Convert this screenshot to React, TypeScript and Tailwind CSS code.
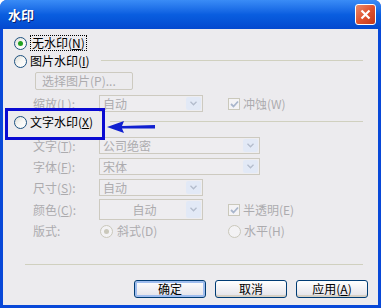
import type { ReactNode } from 'react'

const font = { fontFamily: '"Noto Sans CJK SC", "Noto Sans", sans-serif' }

function Key({ k }: { k: string }) {
  return (
    <span>
      (<span className="underline underline-offset-1">{k}</span>)
    </span>
  )
}

function Radio({ checked, disabled }: { checked?: boolean; disabled?: boolean }) {
  return (
    <span
      className={`flex h-[13px] w-[13px] shrink-0 items-center justify-center rounded-full border ${
        disabled
          ? 'border-[#cac8bb] bg-[#f3f2f4]'
          : 'border-[#1c5180] bg-gradient-to-br from-[#dcdcd6] via-[#f7f7f5] to-white'
      }`}
    >
      {checked && (
        <span
          className={`h-[5px] w-[5px] rounded-full ${disabled ? 'bg-[#cac8bb]' : 'bg-[#21a121]'}`}
        />
      )}
    </span>
  )
}

function Checkbox() {
  return (
    <span className="flex h-[12px] w-[12px] shrink-0 items-center justify-center border border-[#cac8bb] bg-[#f4f3f5]">
      <svg width="9" height="8" viewBox="0 0 9 8">
        <path d="M1 4 L3.5 6.5 L8 1.5" fill="none" stroke="#a9b6cc" strokeWidth="1.8" />
      </svg>
    </span>
  )
}

function Select({ text, w, h = 17, center }: { text: string; w: number; h?: number; center?: boolean }) {
  return (
    <div
      className="flex items-stretch border border-[#cdcac0] bg-[#eeedf0] p-px"
      style={{ width: w, height: h }}
    >
      <span className={`flex flex-1 items-center pl-[2px] text-[#acabae] ${center ? 'justify-center' : ''}`}>
        {text}
      </span>
      <span className="flex w-[15px] items-center justify-center rounded-[2px] bg-[#e2e9f6]">
        <svg width="7" height="5" viewBox="0 0 7 5">
          <path d="M0.5 0.8 L3.5 3.8 L6.5 0.8" fill="none" stroke="#b3bccc" strokeWidth="1.3" />
        </svg>
      </span>
    </div>
  )
}

function Label({ children }: { children: ReactNode }) {
  return <span className="w-[66px] shrink-0 text-[#acabae]">{children}</span>
}

function XpButton({ children, isDefault }: { children: ReactNode; isDefault?: boolean }) {
  return (
    <button
      className={`flex h-[18px] w-[72px] items-center justify-center rounded-[3px] border border-[#003c74] bg-gradient-to-b from-white to-[#e3e2e8] text-black ${
        isDefault ? 'shadow-[inset_0_0_0_2px_#9fbdee]' : 'shadow-[inset_0_-2px_0_#d6d0c5]'
      }`}
    >
      {children}
    </button>
  )
}

export default function App() {
  return (
    <div
      className="flex h-[308px] w-[381px] flex-col overflow-hidden rounded-t-[7px] bg-[#0848d8] text-[12px] leading-[14px]"
      style={font}
    >
      {/* title bar */}
      <div className="flex h-[29px] shrink-0 items-center justify-between bg-gradient-to-b from-[#3a8cf6] via-[#0a5ee0] to-[#0449cf] pl-[8px] pr-[5px]">
        <span className="text-[13px] font-bold text-white [text-shadow:1px_1px_0_#0a1e6e]">水印</span>
        <span className="flex h-[21px] w-[21px] items-center justify-center rounded-[3px] border border-white bg-gradient-to-br from-[#e88a6c] via-[#e0532f] to-[#c2371a]">
          <svg width="11" height="11" viewBox="0 0 11 11">
            <path d="M1.5 1.5 L9.5 9.5 M9.5 1.5 L1.5 9.5" stroke="white" strokeWidth="2.2" />
          </svg>
        </span>
      </div>

      {/* body */}
      <div className="relative mx-[3px] mb-[3px] flex flex-1 flex-col bg-[#ecebee] pl-[11px] pr-[10px] pt-[5px] text-black">
        <div className="flex h-[18px] items-center gap-[3px]">
          <Radio checked />
          <span className="border border-dotted border-black px-px">
            无水印<Key k="N" />
          </span>
        </div>

        <div className="flex h-[18px] items-center gap-[3px]">
          <Radio />
          <span>
            图片水印<Key k="I" />
          </span>
          <span className="ml-[8px] mr-[5px] h-[2px] flex-1 border-t border-[#d0d0bf] border-b-white" />
        </div>

        <div className="ml-[21px] mt-[2px] flex h-[18px] w-[98px] items-center rounded-[2px] border border-[#cdcac0] pl-[6px] text-[#acabae]">
          选择图片(P)...
        </div>

        <div className="ml-[19px] mt-[5px] flex h-[17px] items-center">
          <Label>
            缩放(<span className="underline">L</span>):
          </Label>
          <Select text="自动" w={104} />
          <span className="ml-[25px] flex items-center gap-[3px] text-[#acabae]">
            <Checkbox />
            冲蚀(W)
          </span>
        </div>

        <div className="mt-px flex h-[18px] items-center gap-[3px]">
          <Radio />
          <span>
            文字水印<Key k="X" />
          </span>
          <span className="ml-[14px] mr-[5px] h-[2px] flex-1 border-t border-[#d0d0bf] border-b-white" />
        </div>

        <div className="ml-[19px] mt-[6px] flex flex-col gap-[4px]">
          <div className="flex h-[17px] items-center">
            <Label>
              文字(<span className="underline">T</span>):
            </Label>
            <Select text="公司绝密" w={161} />
          </div>
          <div className="flex h-[17px] items-center">
            <Label>
              字体(<span className="underline">F</span>):
            </Label>
            <Select text="宋体" w={161} />
          </div>
          <div className="flex h-[17px] items-center">
            <Label>
              尺寸(<span className="underline">S</span>):
            </Label>
            <Select text="自动" w={104} />
          </div>
          <div className="-mt-px flex h-[21px] items-center">
            <Label>
              颜色(<span className="underline">C</span>):
            </Label>
            <Select text="自动" w={104} h={21} center />
            <span className="ml-[25px] flex items-center gap-[3px] text-[#acabae]">
              <Checkbox />
              半透明(E)
            </span>
          </div>
          <div className="-mt-[2px] flex h-[18px] items-center">
            <Label>版式:</Label>
            <span className="ml-[1px] flex w-[128px] items-center gap-[4px] text-[#acabae]">
              <Radio checked disabled />
              斜式(D)
            </span>
            <span className="flex items-center gap-[3px] text-[#acabae]">
              <Radio disabled />
              水平(H)
            </span>
          </div>
        </div>

        <div className="ml-[11px] mr-[5px] mt-[24px] h-[2px] border-t border-[#d0d0bf] border-b-white" />

        <div className="mt-[14px] flex justify-end gap-[9px]">
          <XpButton isDefault>确定</XpButton>
          <XpButton>取消</XpButton>
          <XpButton>
            应用<Key k="A" />
          </XpButton>
        </div>

        {/* annotation overlay */}
        <div className="pointer-events-none absolute left-[2px] top-[79px] h-[32px] w-[100px] border-[3px] border-[#0a0ad2]" />
        <svg className="pointer-events-none absolute left-[104px] top-[91px]" width="52" height="14" viewBox="0 0 52 14">
          <path d="M0 7 L17 1 L15 6 L48 5 L48 8.5 L15 8.5 L17 13 Z" fill="#1020d0" />
        </svg>
      </div>
    </div>
  )
}
